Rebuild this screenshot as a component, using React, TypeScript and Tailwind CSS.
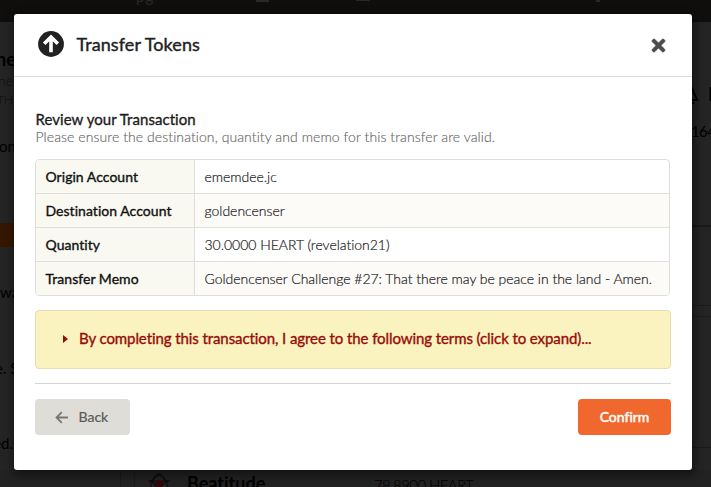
import React from 'react';
import { FaTimes } from 'react-icons/fa';

const rows = [
  { label: 'Origin Account', value: 'ememdee.jc' },
  { label: 'Destination Account', value: 'goldencenser' },
  { label: 'Quantity', value: '30.0000 HEART (revelation21)' },
  { label: 'Transfer Memo', value: 'Goldencenser Challenge #27: That there may be peace in the land - Amen.' },
];

function Backdrop() {
  return (
    <div className="flex flex-col h-full bg-[#242424] text-black">
      <div className="flex h-[22px] shrink-0 bg-[#0f0e0c] text-[15px] leading-[15px] text-[#292826]">
        <span className="ml-[136px] -mt-[11px] w-[22px] tracking-[1px]">pg</span>
        <span className="ml-[98px] h-[2px] w-[13px] bg-[#292826]" />
        <span className="ml-[87px] h-px w-[14px] bg-[#292826]" />
        <span className="ml-[226px] h-[2px] w-1 bg-[#292826]" />
      </div>
      <div className="flex flex-1 justify-between min-h-0">
        <div className="flex flex-col w-[14px] whitespace-nowrap text-[15px] leading-5">
          <span className="mt-[27px] -ml-[4px] h-5 text-[18px] font-bold">ner</span>
          <span className="mt-[2px] -ml-[2px] h-5 text-[14px] font-light text-[#0c0c0c]">ner</span>
          <span className="-mt-[1px] -ml-[3px] h-5 text-[12px] font-light text-[#0c0c0c]">TH</span>
          <span className="mt-[26px] -ml-[1px] h-5">on</span>
          <span className="mt-[67px] h-6 shrink-0 bg-[#351700]" />
          <span className="mt-[35px] h-5">wa</span>
          <span className="mt-[56px] -ml-[5px] h-5">e. S</span>
          <span className="mt-[55px] -ml-[12px] h-5">red.</span>
        </div>
        <div className="flex flex-col w-[20px] whitespace-nowrap text-[15px] leading-5">
          <div className="flex gap-[9px] mt-[62px] h-[23px]">
            <svg className="w-[8px] h-[22px] shrink-0" viewBox="0 0 8 22" fill="none" stroke="#000" strokeWidth="2">
              <path d="M0 3c3 2 1 5 4 8l2 5H0M0 19h3" />
            </svg>
            <span className="text-[18px] font-bold">H</span>
          </div>
          <span className="mt-[14px] h-5 tracking-[-0.6px]">164</span>
          <span className="mt-[84px] h-[2px] shrink-0 bg-[#191919]" />
          <span className="mt-[78px] h-px shrink-0 bg-[#1b1b1b]" />
          <span className="mt-[10px] h-px shrink-0 bg-[#1b1b1b]" />
          <span className="mt-[130px] h-px shrink-0 bg-[#1b1b1b]" />
        </div>
      </div>
      <div className="flex h-[17px] shrink-0 pl-[120px] whitespace-nowrap bg-[#222]">
        <span className="w-px bg-[#1b1b1b]" />
        <span className="ml-[13px] w-px bg-[#1b1b1b]" />
        <svg className="ml-[12px] mt-[2px] w-6 h-[22px] shrink-0" viewBox="0 0 24 22" fill="none" stroke="#0a0505" strokeWidth="1">
          <path d="M6 10c0-5 3-8 6-8s6 3 6 8M1 9h22M4 9l8-6 8 6M4 22V9l8 8 8-8v13" />
          <path d="M12 17c-5-3-6-8-2-8l2 1 2-1c4 0 3 5-2 8z" fill="#350406" stroke="none" />
        </svg>
        <span className="ml-[16px] mt-[3px] w-[78px] text-[18px] leading-5 font-bold">Beatitude</span>
        <span className="ml-[109px] mt-[5px] text-[15px] leading-5 font-light tracking-[-0.6px]">78.8900 HEART</span>
      </div>
    </div>
  );
}

function TransferModal() {
  return (
    <div className="flex absolute flex-col top-[14px] left-[14px] w-[678px] h-[456px] bg-white rounded-[3px] shadow-[1px_3px_8px_2px_rgba(0,0,0,0.45)]">
      <header className="flex items-center h-[63px] shrink-0 pr-[26px] pl-6 border-b border-[#dededd]">
        <svg className="w-[26px] h-[26px] -mt-[2px]" viewBox="0 0 26 26" fill="none">
          <circle cx="13" cy="13" r="12.9" fill="#222" />
          <path d="M6.2 12.8L13 6l6.8 6.8M13 7v14.2" stroke="#fff" strokeWidth="3.6" />
        </svg>
        <h1 className="ml-[12.5px] -mt-[2px] text-[18px] leading-6 tracking-[0.08px] text-[#222] [-webkit-text-stroke:0.4px_#222]">
          Transfer Tokens
        </h1>
        <button className="ml-auto pt-px text-[#4b4b4b]" aria-label="Close">
          <FaTimes className="w-[15px] h-[19px] stroke-[#4b4b4b] stroke-[20]" />
        </button>
      </header>
      <div className="px-[21px] pt-[33px]">
        <h2 className="h-[18px] pl-[0.5px] text-[15px] leading-[18px] tracking-[0.05px] text-[#1d1d1d] [-webkit-text-stroke:0.35px_#1d1d1d]">
          Review your Transaction
        </h2>
        <p className="h-[18px] pl-[0.5px] text-[14px] leading-[18px] font-light tracking-[0.08px] text-[#666] [-webkit-text-stroke:0.15px_#666]">
          Please ensure the destination, quantity and memo for this transfer are valid.
        </p>
        <div className="mt-[13px] w-[635px] h-[137px] overflow-hidden rounded-[4px] border border-[#dededc]">
          {rows.map((row) => (
            <div key={row.label} className="flex h-[34px] border-b border-[#dededc] leading-[34px] text-[14px] last:border-b-0 even:bg-[#fcfbf8]">
              <div className="w-[159px] pl-[9.5px] border-r border-[#dededc] bg-[#f9f9f1] tracking-[0.04px] text-[#111] [-webkit-text-stroke:0.35px_#111]">
                {row.label}
              </div>
              <div className="pl-[9.5px] whitespace-nowrap font-light tracking-[-0.02px] text-[#222] [-webkit-text-stroke:0.2px_#222]">{row.value}</div>
            </div>
          ))}
        </div>
        <div className="flex items-center mt-[14px] h-[59px] pl-[27px] rounded-[4px] border border-[#e6dcb0] bg-[#fbf3bf] text-[#970b08]">
          <span className="-mt-[2px] w-0 h-0 border-y-[4.5px] border-l-[5px] border-y-transparent border-l-[#970b08]" />
          <span className="ml-[11px] -mt-[2px] text-[15px] tracking-[-0.085px] [-webkit-text-stroke:0.35px_#970b08]">
            By completing this transaction, I agree to the following terms (click to expand)...
          </span>
        </div>
        <div className="mt-[14px] border-t border-[#d4d4d5]" />
        <div className="flex justify-between mt-[15px]">
          <button className="flex items-center w-[95px] h-9 pl-5 rounded-[4px] bg-[#dfddd7] text-[14px] text-[#595959]">
            <svg className="w-[13px] h-[13px]" viewBox="0 0 13 13" fill="none" stroke="#777" strokeWidth="1.8">
              <path d="M6.8 1.2L1.5 6.5l5.3 5.3M1.8 6.5H13" />
            </svg>
            <span className="ml-[10.5px] -mt-[2px] [-webkit-text-stroke:0.2px_#595959]">Back</span>
          </button>
          <button className="w-[93px] h-9 pb-[2px] rounded-[4px] bg-[#f1682e] text-[14px] text-white [-webkit-text-stroke:0.5px_white]">Confirm</button>
        </div>
      </div>
    </div>
  );
}

export default function App() {
  return (
    <div className="relative overflow-hidden w-[711px] h-[487px] font-[Lato,sans-serif] [font-variant-ligatures:none]">
      <Backdrop />
      <TransferModal />
    </div>
  );
}
